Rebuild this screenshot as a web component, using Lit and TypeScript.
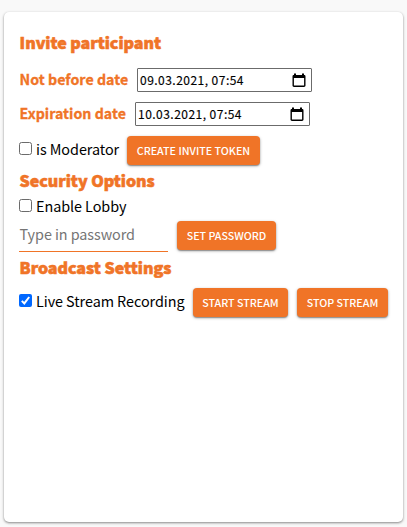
import { LitElement, html, css } from "lit";
import { customElement, property } from "lit/decorators.js";

@customElement("date-field")
class DateField extends LitElement {
  @property() value = "";

  static styles = css`
    :host {
      display: flex;
      box-sizing: border-box;
      width: 175px;
      height: 24px;
      align-items: center;
      justify-content: space-between;
      padding: 0 5px 0 2px;
      border: 1px solid #6b6b6b;
      border-radius: 1px;
      background: #fff;
      color: #000;
    }
    .value {
      font-size: 12px;
      line-height: 22px;
      letter-spacing: 0.47px;
      white-space: pre;
      -webkit-text-stroke: 0.15px currentColor;
    }
    svg {
      display: block;
      width: 14px;
      height: 15px;
    }
  `;

  render() {
    return html`
      <span class="value">${this.value}</span>
      <svg viewBox="0 0 14 15">
        <path d="M2 0.500h2v1.500h6V0.500h2V2c.9 0 1.500.5 1.500 1.400v9.200c0 .9-.6 1.400-1.500 1.400H2c-.9 0-1.500-.5-1.500-1.400V3.400C.5 2.500 1.100 2 2 2zM1.900 5v7.600h10.200V5z" fill="#000" fill-rule="evenodd"/>
      </svg>
    `;
  }
}

@customElement("check-item")
class CheckItem extends LitElement {
  @property({ type: Boolean }) checked = false;

  static styles = css`
    :host {
      display: flex;
      align-items: center;
      gap: 4px;
      letter-spacing: -0.06px;
    }
    svg {
      display: block;
      width: 13px;
      height: 13px;
      flex: none;
      margin-top: -1px;
    }
  `;

  render() {
    return html`
      ${this.checked
        ? html`<svg viewBox="0 0 13 13">
            <rect width="13" height="13" rx="2" fill="#0068ff" />
            <path d="M2.800 6.900L5.300 9.400L10.200 3" fill="none" stroke="#fff" stroke-width="2" />
          </svg>`
        : html`<svg viewBox="0 0 13 13">
            <rect x=".5" y=".5" width="12" height="12" rx="2" fill="#fff" stroke="#6b6b6b" />
          </svg>`}
      <slot></slot>
    `;
  }
}

@customElement("app-root")
class AppRoot extends LitElement {
  static styles = css`
    :host {
      display: block;
      box-sizing: border-box;
      height: 527px;
      padding: 12px 4px 5px;
      background: #f9f9f9;
      overflow: hidden;
      font-family: "Noto Sans CJK JP", "Noto Sans", sans-serif;
      font-size: 14.400px;
      line-height: 22px;
      color: #000;
      white-space: nowrap;
    }
    .card {
      box-sizing: border-box;
      height: 510px;
      padding: 18px 15px 0;
      border-radius: 5px;
      background: #fff;
      box-shadow: 0 1px 3px rgba(0, 0, 0, 0.3), 0 1px 2px rgba(0, 0, 0, 0.2);
    }
    h3 {
      margin: 0;
      height: 22px;
      padding-left: 0.600px;
      font-size: 16px;
      font-weight: 900;
      letter-spacing: -0.03px;
      color: #f07427;
      -webkit-text-stroke: 0.6px #f07427;
    }
    .row {
      display: flex;
      align-items: center;
      height: 30px;
    }
    .title {
      box-sizing: border-box;
      margin-top: -2px;
      padding-left: 0.600px;
      font-size: 14.200px;
      font-weight: 700;
      letter-spacing: 0.02px;
      color: #f07427;
      -webkit-text-stroke: 0.3px #f07427;
    }
    .before .title { width: 109px; }
    .expires .title { width: 107px; }
    .invite { height: 24px; line-height: 24px; }
    .before { margin-top: 11px; gap: 9px; }
    .expires { margin-top: 4px; gap: 9px; }
    .moderator { margin-top: 6px; gap: 8px; }
    .moderator check-item { width: 100px; }
    .security { margin-top: 4px; }
    .lobby { height: 22px; margin-top: 4px; }
    .password { margin-top: 4px; gap: 9px; height: 31px; align-items: flex-start; }
    .broadcast { margin-top: 4px; }
    .stream { margin-top: 9px; gap: 9px; }
    .stream check-item { width: 165px; }
    .moderator check-item, .stream check-item { margin-top: -2px; }
    .entry {
      box-sizing: border-box;
      width: 149px;
      height: 31px;
      padding-left: 0.600px;
      border-bottom: 1px solid #f07427;
      line-height: 26px;
      letter-spacing: -0.07px;
      color: #757575;
    }
    button {
      box-sizing: border-box;
      height: 29px;
      padding: 0;
      border: 0;
      border-radius: 4px;
      background: #f07427;
      box-shadow: 0 1px 3px rgba(0, 0, 0, 0.35), 0 1px 1px rgba(0, 0, 0, 0.25);
      color: #fff;
      font: 500 10.700px/29px "Noto Sans CJK JP", sans-serif;
      text-align: center;
      white-space: nowrap;
    }
    .create { width: 133px; }
    .set { width: 99px; }
    .start { width: 95px; }
    .stop { width: 91px; }
  `;

  render() {
    return html`
      <div class="card">
        <h3 class="invite">Invite participant</h3>
        <div class="row before">
          <span class="title">Not before date</span>
          <date-field value="09.03.2021, 07:54"></date-field>
        </div>
        <div class="row expires">
          <span class="title">Expiration date</span>
          <date-field value="10.03.2021, 07:54"></date-field>
        </div>
        <div class="row moderator">
          <check-item>is Moderator</check-item>
          <button class="create">CREATE INVITE TOKEN</button>
        </div>
        <h3 class="security">Security Options</h3>
        <div class="row lobby"><check-item>Enable Lobby</check-item></div>
        <div class="row password">
          <div class="entry">Type in password</div>
          <button class="set">SET PASSWORD</button>
        </div>
        <h3 class="broadcast">Broadcast Settings</h3>
        <div class="row stream">
          <check-item checked>Live Stream Recording</check-item>
          <button class="start">START STREAM</button>
          <button class="stop">STOP STREAM</button>
        </div>
      </div>
    `;
  }
}
